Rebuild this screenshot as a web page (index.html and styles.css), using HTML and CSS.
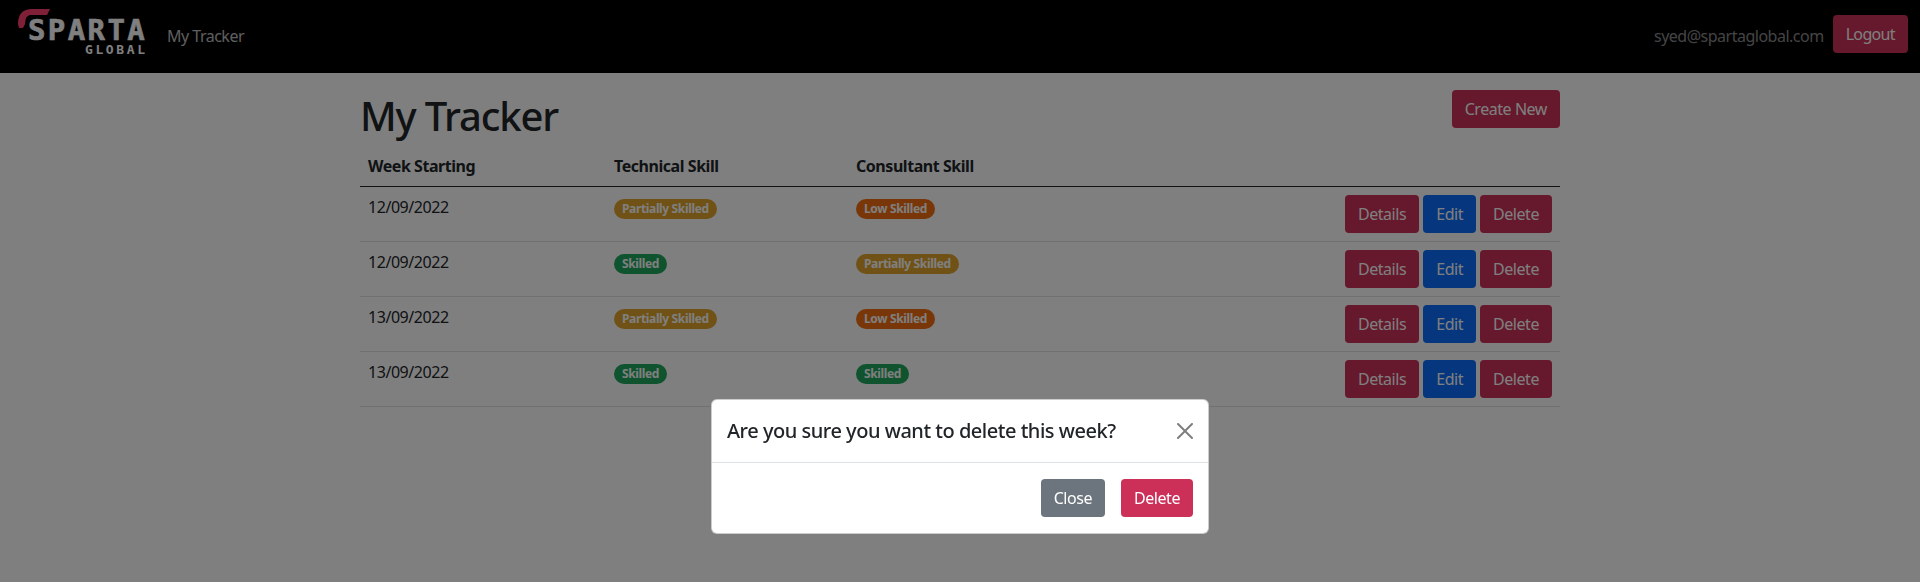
FILE: index.html
```html
<!DOCTYPE html>
<html lang="en">
<head>
  <meta charset="utf-8">
  <meta name="viewport" content="width=device-width, initial-scale=1">
  <title>My Tracker</title>
  <link rel="stylesheet" href="styles.css">
</head>
<body>

  <nav class="navbar">
    <a class="brand" href="#">
      <svg class="brand-swoosh" viewBox="0 0 32 19" aria-hidden="true">
        <path d="M0 15 C0 5 5 0 14 0 L32 0 L29 6 L14 6 C10 6 8 8 7.5 11 L7 15 L5 19 L1 19 Z"/>
      </svg>
      <span class="brand-sparta">SPARTA</span>
      <span class="brand-global">GLOBAL</span>
    </a>
    <a class="nav-link" href="#">My Tracker</a>
    <span class="nav-user">syed@spartaglobal.com</span>
    <a class="btn btn-brand btn-logout" href="#">Logout</a>
  </nav>

  <main>
    <div class="page-head">
      <h1>My Tracker</h1>
      <a class="btn btn-brand" href="#">Create New</a>
    </div>

    <table class="tracker">
      <thead>
        <tr>
          <th class="col-week">Week Starting</th>
          <th class="col-tech">Technical Skill</th>
          <th>Consultant Skill</th>
          <th></th>
        </tr>
      </thead>
      <tbody>
        <tr>
          <td>12/09/2022</td>
          <td><span class="badge badge-partial">Partially Skilled</span></td>
          <td><span class="badge badge-low">Low Skilled</span></td>
          <td class="actions">
            <a class="btn btn-brand" href="#">Details</a>
            <a class="btn btn-edit" href="#">Edit</a>
            <a class="btn btn-brand" href="#">Delete</a>
          </td>
        </tr>
        <tr>
          <td>12/09/2022</td>
          <td><span class="badge badge-skilled">Skilled</span></td>
          <td><span class="badge badge-partial">Partially Skilled</span></td>
          <td class="actions">
            <a class="btn btn-brand" href="#">Details</a>
            <a class="btn btn-edit" href="#">Edit</a>
            <a class="btn btn-brand" href="#">Delete</a>
          </td>
        </tr>
        <tr>
          <td>13/09/2022</td>
          <td><span class="badge badge-partial">Partially Skilled</span></td>
          <td><span class="badge badge-low">Low Skilled</span></td>
          <td class="actions">
            <a class="btn btn-brand" href="#">Details</a>
            <a class="btn btn-edit" href="#">Edit</a>
            <a class="btn btn-brand" href="#">Delete</a>
          </td>
        </tr>
        <tr>
          <td>13/09/2022</td>
          <td><span class="badge badge-skilled">Skilled</span></td>
          <td><span class="badge badge-skilled">Skilled</span></td>
          <td class="actions">
            <a class="btn btn-brand" href="#">Details</a>
            <a class="btn btn-edit" href="#">Edit</a>
            <a class="btn btn-brand" href="#">Delete</a>
          </td>
        </tr>
      </tbody>
    </table>
  </main>

  <div class="backdrop">
    <div class="modal">
      <div class="modal-header">
        <h5>Are you sure you want to delete this week?</h5>
        <button class="btn-close" aria-label="Close">
          <svg viewBox="0 0 16 16" aria-hidden="true">
            <path d="M.293.293a1 1 0 0 1 1.414 0L8 6.586 14.293.293a1 1 0 1 1 1.414 1.414L9.414 8l6.293 6.293a1 1 0 0 1-1.414 1.414L8 9.414l-6.293 6.293a1 1 0 0 1-1.414-1.414L6.586 8 .293 1.707a1 1 0 0 1 0-1.414z"/>
          </svg>
        </button>
      </div>
      <div class="modal-footer">
        <a class="btn btn-close-modal" href="#">Close</a>
        <a class="btn btn-brand" href="#">Delete</a>
      </div>
    </div>
  </div>

</body>
</html>
```

FILE: styles.css
```css
*, *::before, *::after { box-sizing: border-box }

body {
  font: 16px/1.5 "Noto Sans", "Open Sans", sans-serif;
  margin: 0;
  min-height: 582px;
  background: #fff;
  color: #212529;
  --brand: #cc3059;
  --edit: #0d6efd;
}

a {
  text-decoration: none;
}


/*///////////// Navbar */

.navbar {
  display: flex;
  align-items: center;
  height: 73px;
  padding: 0 12px 5px;
  background: #000;
}

.brand {
  position: relative;
  display: block;
  align-self: flex-start;
  width: 155px;
  height: 68px;
  flex: none;
}

.brand-swoosh {
  position: absolute;
  left: 6px;
  top: 9px;
  width: 32px;
  height: 19px;
  fill: #ff4070;
}

.brand-sparta {
  position: absolute;
  left: 16px;
  top: 19px;
  font: bold 29px/22px "DejaVu Sans Mono", monospace;
  letter-spacing: 2.4px;
  color: #fff;
  -webkit-text-stroke: .6px #fff;
}

.brand-global {
  position: absolute;
  left: 73px;
  top: 44px;
  font: bold 13px/12px "DejaVu Sans Mono", monospace;
  letter-spacing: 2.6px;
  color: #fff;
}

.nav-link {
  padding-top: 3px;
  color: rgba(255, 255, 255, .75);
  letter-spacing: -0.5px;
}

.nav-user {
  margin-left: auto;
  margin-right: 9px;
  padding-top: 3px;
  color: rgba(255, 255, 255, .55);
  letter-spacing: -0.5px;
}


/*///////////// Buttons */

.btn {
  display: inline-block;
  padding: 6px 12px;
  border: 1px solid transparent;
  border-radius: 4px;
  line-height: 24px;
  color: #fff;
  letter-spacing: -0.45px;
}

.btn-logout {
  letter-spacing: -0.65px;
}

.btn-brand {
  background: var(--brand);
}

.btn-edit {
  background: var(--edit);
}

.btn-close-modal {
  background: #6c757d;
}


/*///////////// Page */

main {
  width: 1200px;
  margin: 0 auto;
  padding-top: 17px;
}

.page-head {
  display: flex;
  justify-content: space-between;
  align-items: flex-start;
  margin-bottom: 8px;
}

h1 {
  margin: 0;
  padding-top: 3px;
  font-size: 40px;
  font-weight: 500;
  line-height: 45px;
  letter-spacing: -1.15px;
}


/*///////////// Table */

.tracker {
  width: 100%;
  border-collapse: collapse;
  table-layout: fixed;
}

.tracker th,
.tracker td {
  padding: 8px;
  text-align: left;
  vertical-align: top;
  letter-spacing: -0.45px;
}

.tracker th {
  font-weight: bold;
  border-bottom: 1px solid #212529;
}

.tracker td {
  border-bottom: 1px solid #dee2e6;
}

.col-week {
  width: 246px;
}

.col-tech {
  width: 242px;
}

.tracker .actions {
  text-align: right;
  font-size: 0;
}

.actions .btn {
  margin-left: 4px;
  font-size: 16px;
}

.badge {
  display: inline-block;
  padding: 4px 8px;
  border-radius: 10px;
  font-size: 12px;
  font-weight: bold;
  line-height: 12px;
  color: #fff;
  letter-spacing: -0.35px;
  vertical-align: baseline;
}

.badge-partial { background: #e0a52f; }
.badge-low { background: #f26f12; }
.badge-skilled { background: #1fa85f; }


/*///////////// Modal */

.backdrop {
  position: fixed;
  inset: 0;
  display: flex;
  justify-content: center;
  align-items: flex-start;
  padding-top: 399px;
  background: rgba(0, 0, 0, .5);
}

.modal {
  width: 498px;
  background: #fff;
  border: 1px solid rgba(0, 0, 0, .2);
  border-radius: 6px;
}

.modal-header {
  display: flex;
  justify-content: space-between;
  align-items: center;
  padding: 16px 15px;
  border-bottom: 1px solid #dee2e6;
}

.modal-header h5 {
  margin: 0;
  font-size: 20px;
  font-weight: 500;
  line-height: 30px;
  letter-spacing: -0.48px;
}

.btn-close {
  display: block;
  width: 16px;
  height: 16px;
  padding: 0;
  border: none;
  background: none;
  opacity: .5;
  cursor: pointer;
}

.btn-close svg {
  display: block;
  width: 16px;
  height: 16px;
}

.modal-footer {
  display: flex;
  justify-content: flex-end;
  gap: 16px;
  padding: 16px 15px;
}
```
